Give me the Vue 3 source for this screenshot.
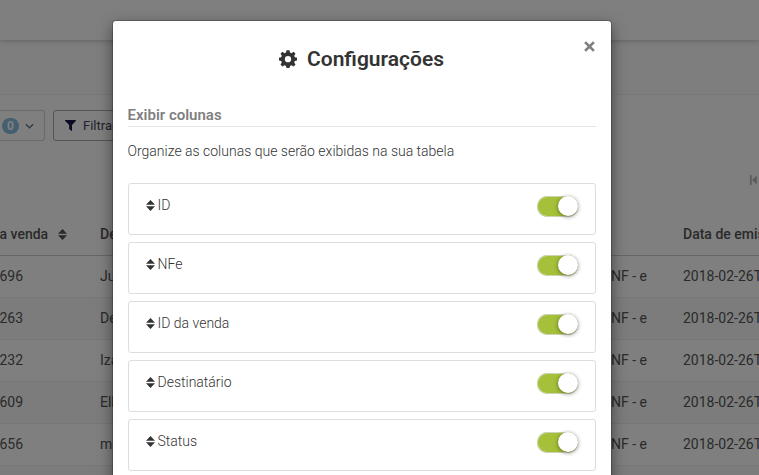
<script setup>
const rows = [
  { id: '696', name: 'Juliana' },
  { id: '263', name: 'Denise' },
  { id: '232', name: 'Izabel' },
  { id: '609', name: 'Ellen' },
  { id: '656', name: 'maria' },
  { id: '', name: '' }
]
const columns = ['ID', 'NFe', 'ID da venda', 'Destinatário', 'Status']
</script>

<template>
  <div class="screen">
    <div class="page">
      <header class="topbar"></header>
      <div class="subbar"></div>
      <div class="toolbar">
        <div class="btn select">
          <span class="badge">0</span>
          <svg class="chevron" viewBox="0 0 10 6"><path d="M1 1l4 4 4-4" fill="none" stroke="#6a6d88" stroke-width="1.4" /></svg>
        </div>
        <div class="btn filter">
          <svg class="funnel" viewBox="0 0 11 11"><path d="M.5 0h10q.7.2.3.9L7 4.9V10.500q-.2.7-.8.3L4.200 9.100V4.900L.2.900Q-.2.200.5 0z" fill="#17174b" /></svg>
          <span>Filtrar</span>
        </div>
      </div>
      <div class="pager">
        <svg viewBox="0 0 7 10"><path d="M0 0h1.700v10H0zM6.800.4v9.200L2 5z" fill="#b8b8b8" /></svg>
      </div>
      <div class="table">
        <div class="tr head">
          <span>a venda <svg class="sort" viewBox="0 0 9 11"><path d="M4.500 0L9 4.800H0zM0 6.200h9L4.500 11z" /></svg></span>
          <span>Destinatário</span>
          <span></span>
          <span>Data de emissão</span>
        </div>
        <div v-for="(r, i) in rows" :key="i" class="tr">
          <span>{{ r.id }}</span>
          <span>{{ r.name }}</span>
          <span>NF - e</span>
          <span>2018-02-26T00:00</span>
        </div>
      </div>
    </div>

    <div class="backdrop">
      <section class="modal">
        <button class="close" aria-label="Fechar">
          <svg viewBox="0 0 10 10"><path d="M1 1l8 8M9 1L1 9" fill="none" stroke="#808080" stroke-width="2.500" /></svg>
        </button>
        <h2 class="title">
          <svg class="gear" viewBox="0 0 18 18">
            <path fill-rule="evenodd" d="M7.500.2h3l.5 2.300 1.500.7 2.100-1.400 1.900 1.900-1.300 2.100.6 1.500 2.200.4v2.900l-2.200.5-.6 1.400 1.300 2.100-1.900 2-2.100-1.300-1.500.6-.5 2.200h-3L7 15.900l-1.500-.6-2.100 1.300-1.900-2 1.300-2.100-.6-1.400L0 10.600V7.700l2.200-.4.6-1.500-1.300-2.100 1.900-1.900 2.100 1.400L7 2.500zM9 6a3.150 3.150 0 1 0 0 6.300A3.150 3.150 0 0 0 9 6z" fill="#333" />
          </svg>
          <span>Configurações</span>
        </h2>
        <h3 class="subtitle">Exibir colunas</h3>
        <p class="lead">Organize as colunas que serão exibidas na sua tabela</p>
        <ul class="list">
          <li v-for="c in columns" :key="c" class="item">
            <span class="label"><svg class="sort" viewBox="0 0 9 11"><path d="M4.500 0L9 4.800H0zM0 6.200h9L4.500 11z" /></svg>{{ c }}</span>
            <span class="toggle"><span class="knob"></span></span>
          </li>
        </ul>
      </section>
    </div>
  </div>
</template>

<style>
body { margin: 0; overflow: hidden; }
</style>

<style scoped>
* { box-sizing: border-box; }
.screen {
  position: relative;
  width: 759px;
  height: 475px;
  overflow: hidden;
  font-family: Roboto, "Liberation Sans", sans-serif;
  font-size: 14px;
  color: #333;
}
.page { height: 475px; background: #fff; overflow: hidden; color: #555; }
.topbar { position: relative; height: 40px; background: #fff; box-shadow: 0 1px 5px rgba(0, 0, 0, .22); }
.subbar { height: 55px; background: #fcfcfc; border-bottom: 1px solid #f0f0f0; }
.toolbar { display: flex; gap: 8px; padding-top: 15px; }
.btn { display: flex; align-items: center; height: 31px; border: 1px solid #bbb; border-radius: 3px; font-size: 13px; color: #44445c; }
.select { width: 45px; border-left: 0; border-radius: 0 3px 3px 0; padding-left: 2px; gap: 6px; border-color: #d4d4d4; }
.badge { width: 17px; height: 16px; border-radius: 8px; background: #8bbce0; color: #fff; font-size: 12px; font-weight: 700; line-height: 16px; text-align: center; }
.chevron { width: 9px; height: 6px; }
.filter { width: 90px; padding-left: 11px; gap: 7px; border-color: #aaa; }
.funnel { width: 11px; height: 11px; }
.pager { display: flex; justify-content: flex-end; padding: 34px 2px 0 0; }
.pager svg { width: 7px; height: 10px; }
.table { margin-top: 28px; }
.tr {
  display: grid;
  grid-template-columns: 100px 511px 72px 200px;
  height: 42px;
  line-height: 41px;
  border-bottom: 1px solid #ececec;
  white-space: nowrap;
}
.tr:nth-child(odd) { background: #f9f9f9; }
.tr span:first-child { text-indent: -.5px; }
.tr.head { height: 43px; line-height: 42px; font-weight: 500; border-bottom: 1px solid #ccc; background: #fff; }
.head .sort { margin-left: 6px; vertical-align: -1px; fill: #555; }
.sort { width: 9px; height: 11px; fill: #333; }
.backdrop { position: absolute; inset: 0; background: rgba(0, 0, 0, .5); padding: 21px 0 0 113px; }
.modal {
  position: relative;
  width: 498px;
  height: 600px;
  padding: 25px 15px 0;
  background: #fff;
  border-radius: 3px;
  box-shadow: 0 0 0 1px rgba(0, 0, 0, .2), 0 5px 15px rgba(0, 0, 0, .5);
}
.close { position: absolute; top: 20px; right: 16px; width: 11px; height: 11px; padding: 0; border: 0; background: none; }
.close svg { display: block; width: 11px; height: 11px; }
.title { display: flex; align-items: center; justify-content: center; gap: 10px; margin: 0 1px 0 0; height: 26px; font-size: 21px; font-weight: 600; }
.gear { width: 18px; height: 18px; }
.subtitle { margin: 32px 0 0; height: 23px; line-height: 22px; border-bottom: 1px solid #e5e5e5; font-size: 15px; font-weight: 600; color: #808080; }
.subtitle, .lead { text-indent: -.5px; }
.lead { margin: 14px 0 0; line-height: 20px; font-weight: 300; }
.list { display: flex; flex-direction: column; gap: 7px; margin: 22px 0 0; padding: 0; list-style: none; }
.item { display: flex; justify-content: space-between; height: 52px; padding: 11px 17px 0 16.500px; border: 1px solid #ddd; border-radius: 3px; }
.label { display: flex; align-items: center; gap: 3px; height: 20px; font-weight: 300; }
.toggle { display: flex; justify-content: flex-end; width: 41px; height: 21px; margin-top: 1px; border-radius: 11px; background: #a4c139; box-shadow: inset 0 0 0 1px #cdd3b5; }
.knob { width: 20px; height: 20px; border-radius: 50%; background: #fff; box-shadow: 0 1px 4px rgba(0, 0, 0, .45); }
</style>
